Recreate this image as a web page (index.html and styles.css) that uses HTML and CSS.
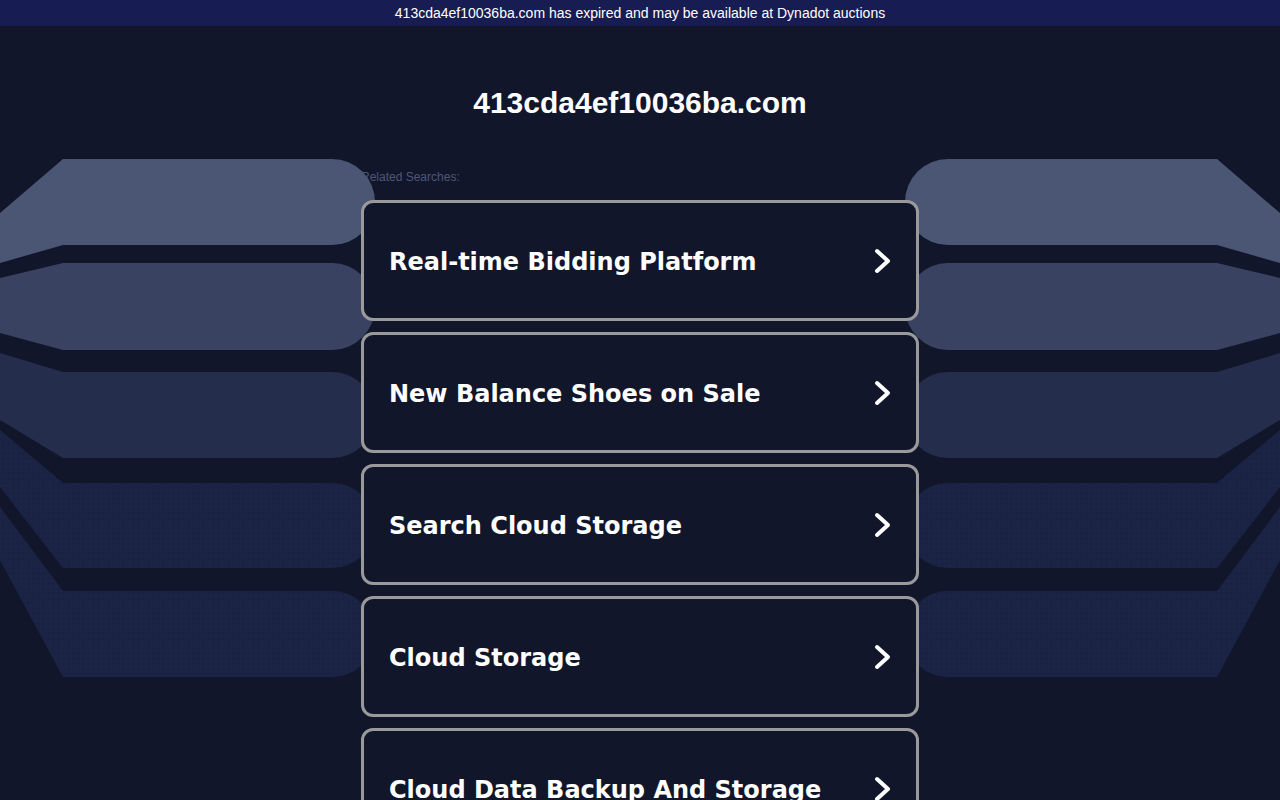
FILE: index.html
```html
<!DOCTYPE html>
<html lang="en">
<head>
<meta charset="utf-8">
<title>413cda4ef10036ba.com</title>
<link rel="stylesheet" href="styles.css">
</head>
<body>
<div class="topbar">413cda4ef10036ba.com has expired and may be available at Dynadot auctions</div>

<svg class="bg" width="1280" height="800" viewBox="0 0 1280 800" xmlns="http://www.w3.org/2000/svg" aria-hidden="true">
  <defs>
    <pattern id="dots" width="5" height="5" patternUnits="userSpaceOnUse">
      <rect width="5" height="5" fill="#1b2345"/>
      <circle cx="1" cy="1" r="0.5" fill="#232c52"/>
      <circle cx="3.5" cy="3.5" r="0.5" fill="#172040"/>
    </pattern>
    <g id="side">
      <path d="M0,213 L63,159 H332 A43,43 0 0 1 332,245 H63 L0,263 Z" fill="#4b5674"/>
      <path d="M0,278 L63,263 H332 A43,43.5 0 0 1 332,350 H63 L0,333 Z" fill="#3a4262"/>
      <path d="M0,353 L63,372 H332 A43,43 0 0 1 332,458 H63 L0,420 Z" fill="#252d4c"/>
      <path d="M0,430 L63,483 H332 A43,42.5 0 0 1 332,568 H63 L0,487 Z" fill="url(#dots)"/>
      <path d="M0,507 L63,591 H332 A43,43 0 0 1 332,677 H63 L0,560 Z" fill="url(#dots)"/>
    </g>
  </defs>
  <use href="#side"/>
  <use href="#side" transform="translate(1280,0) scale(-1,1)"/>
</svg>

<main class="page">
  <h1 class="domain">413cda4ef10036ba.com</h1>
  <div class="label">Related Searches:</div>
  <ul class="cards">
    <li class="card"><span class="card-text">Real-time Bidding Platform</span><svg class="chev" width="17" height="26" viewBox="0 0 17 26"><path d="M3 3 L14 13 L3 23" fill="none" stroke="#fff" stroke-width="4" stroke-linecap="round" stroke-linejoin="round"/></svg></li>
    <li class="card"><span class="card-text">New Balance Shoes on Sale</span><svg class="chev" width="17" height="26" viewBox="0 0 17 26"><path d="M3 3 L14 13 L3 23" fill="none" stroke="#fff" stroke-width="4" stroke-linecap="round" stroke-linejoin="round"/></svg></li>
    <li class="card"><span class="card-text">Search Cloud Storage</span><svg class="chev" width="17" height="26" viewBox="0 0 17 26"><path d="M3 3 L14 13 L3 23" fill="none" stroke="#fff" stroke-width="4" stroke-linecap="round" stroke-linejoin="round"/></svg></li>
    <li class="card"><span class="card-text">Cloud Storage</span><svg class="chev" width="17" height="26" viewBox="0 0 17 26"><path d="M3 3 L14 13 L3 23" fill="none" stroke="#fff" stroke-width="4" stroke-linecap="round" stroke-linejoin="round"/></svg></li>
    <li class="card"><span class="card-text">Cloud Data Backup And Storage</span><svg class="chev" width="17" height="26" viewBox="0 0 17 26"><path d="M3 3 L14 13 L3 23" fill="none" stroke="#fff" stroke-width="4" stroke-linecap="round" stroke-linejoin="round"/></svg></li>
  </ul>
</main>
</body>
</html>
```

FILE: styles.css
```css
html, body {
  margin: 0;
  padding: 0;
}
body {
  background: #11162b;
  font-family: "Liberation Sans", Arial, sans-serif;
  color: #fff;
  overflow: hidden;
  height: 800px;
  position: relative;
}
.topbar {
  height: 26px;
  line-height: 26px;
  background: #171c52;
  color: #fff;
  font-size: 14px;
  text-align: center;
}
.bg {
  position: absolute;
  left: 0;
  top: 0;
  display: block;
}
.page {
  width: 558px;
  margin: 0 auto;
}
.domain {
  margin: 61px 0 0;
  font-size: 30px;
  line-height: 32px;
  font-weight: bold;
  text-align: center;
  color: #fff;
}
.label {
  margin-top: 51px;
  font-size: 12px;
  line-height: 14px;
  color: #4e5778;
}
.cards {
  position: relative;
  z-index: 1;
  list-style: none;
  margin: 16px 0 0;
  padding: 0;
  display: flex;
  flex-direction: column;
  gap: 11px;
}
.card {
  box-sizing: border-box;
  height: 121px;
  border: 3px solid #9a9a9a;
  border-radius: 12px;
  background: #11162b;
  display: flex;
  align-items: center;
  justify-content: space-between;
  padding: 3px 25px 0;
}
.card-text {
  font-family: "DejaVu Sans", Verdana, sans-serif;
  font-weight: bold;
  font-size: 24px;
  color: #fff;
}
.chev {
  display: block;
  flex: none;
  margin-top: -2px;
}
```
